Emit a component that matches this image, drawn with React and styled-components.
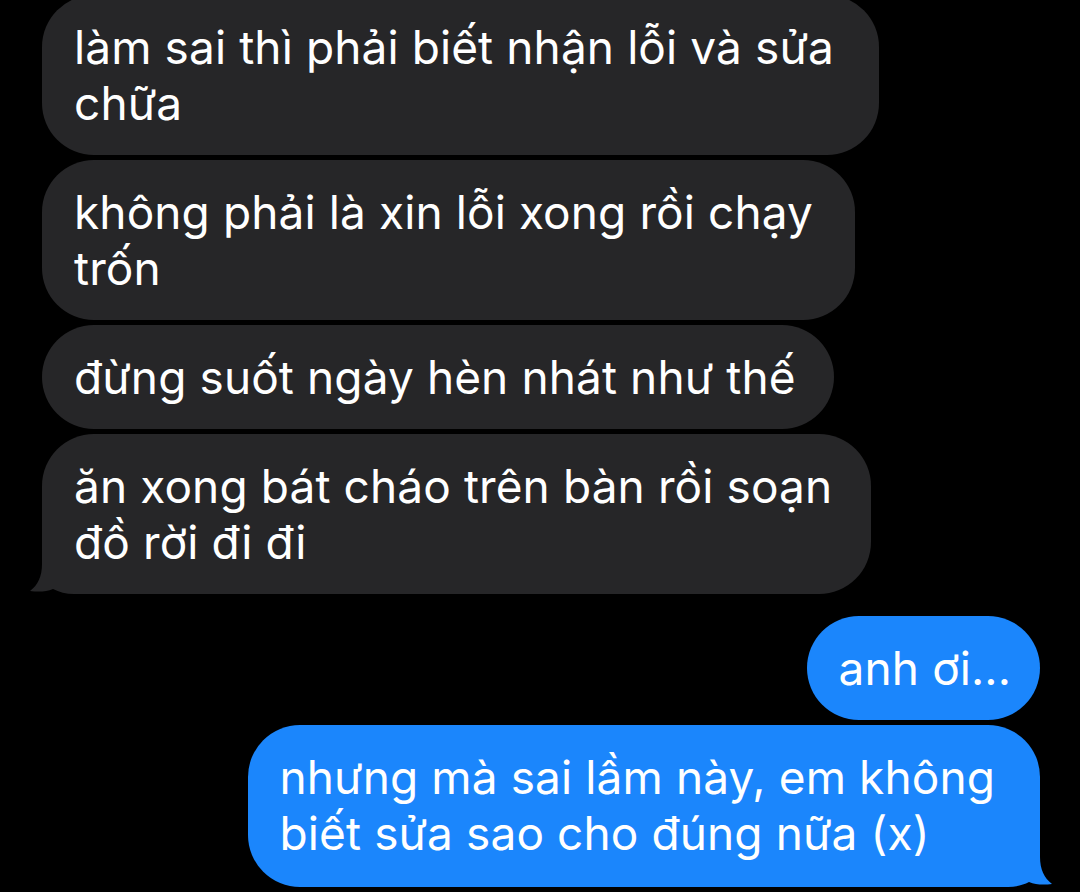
import React from 'react';
import styled, { createGlobalStyle } from 'styled-components';

const GlobalStyle = createGlobalStyle`
  html, body {
    margin: 0;
    padding: 0;
    background: #000000;
  }
  body {
    font-family: Inter, "Noto Sans", "Liberation Sans", sans-serif;
    -webkit-font-smoothing: antialiased;
  }
`;

const Screen = styled.div`
  width: 1080px;
  height: 892px;
  background: #000000;
  overflow: hidden;
`;

const Thread = styled.div`
  display: flex;
  flex-direction: column;
  gap: 5px;
  margin-top: -5px;
  padding: 0 40px 0 42px;
`;

const Group = styled.div`
  display: flex;
  flex-direction: column;
  align-items: ${(p) => (p.$mine ? 'flex-end' : 'flex-start')};
  gap: 5px;
  margin-top: ${(p) => (p.$mine ? '17px' : '0')};
`;

const Bubble = styled.div`
  position: relative;
  box-sizing: border-box;
  padding: 24px ${(p) => p.$right || 32}px ${(p) => (p.$tall ? 26 : 24)}px 32px;
  border-radius: 52px;
  background: ${(p) => (p.$mine ? '#1b86fc' : '#262628')};
  color: #ffffff;
  font-size: 46px;
  line-height: 56px;
  letter-spacing: 0.1px;
  white-space: nowrap;
`;

const Text = styled.span`
  position: relative;
  z-index: 1;
`;

const Tail = styled.svg`
  position: absolute;
  z-index: 0;
  bottom: 0;
  width: 64px;
  height: 60px;
  ${(p) => (p.$mine ? 'right: -12px; transform: scaleX(-1);' : 'left: -12px;')}
`;

const BubbleTail = ({ color, mine }) => (
  <Tail $mine={mine} viewBox="0 0 64 60" aria-hidden="true">
    <path
      d="M12 0 H64 V60 H44 C36 60 29 58 23 55 C16 58 8 58 0 57 C8 51 12 42 12 30 Z"
      fill={color}
    />
  </Tail>
);

const Message = ({ lines, mine, tail, right }) => (
  <Bubble $mine={mine} $right={right} $tall={mine && tail}>
    {tail && <BubbleTail mine={mine} color={mine ? '#1b86fc' : '#262628'} />}
    <Text>
      {lines.map((line, i) => (
        <React.Fragment key={i}>
          {i > 0 && <br />}
          {line}
        </React.Fragment>
      ))}
    </Text>
  </Bubble>
);

const incoming = [
  { lines: ['làm sai thì phải biết nhận lỗi và sửa', 'chữa'], right: 45 },
  { lines: ['không phải là xin lỗi xong rồi chạy', 'trốn'], right: 42 },
  { lines: ['đừng suốt ngày hèn nhát như thế'], right: 38 },
  { lines: ['ăn xong bát cháo trên bàn rồi soạn', 'đồ rời đi đi'], right: 39, tail: true },
];

const outgoing = [
  { lines: ['anh ơi...'], right: 29 },
  { lines: ['nhưng mà sai lầm này, em không', 'biết sửa sao cho đúng nữa (x)'], right: 45, tail: true },
];

export default function App() {
  return (
    <Screen>
      <GlobalStyle />
      <Thread>
        <Group>
          {incoming.map((m, i) => (
            <Message key={i} {...m} />
          ))}
        </Group>
        <Group $mine>
          {outgoing.map((m, i) => (
            <Message key={i} mine {...m} />
          ))}
        </Group>
      </Thread>
    </Screen>
  );
}
